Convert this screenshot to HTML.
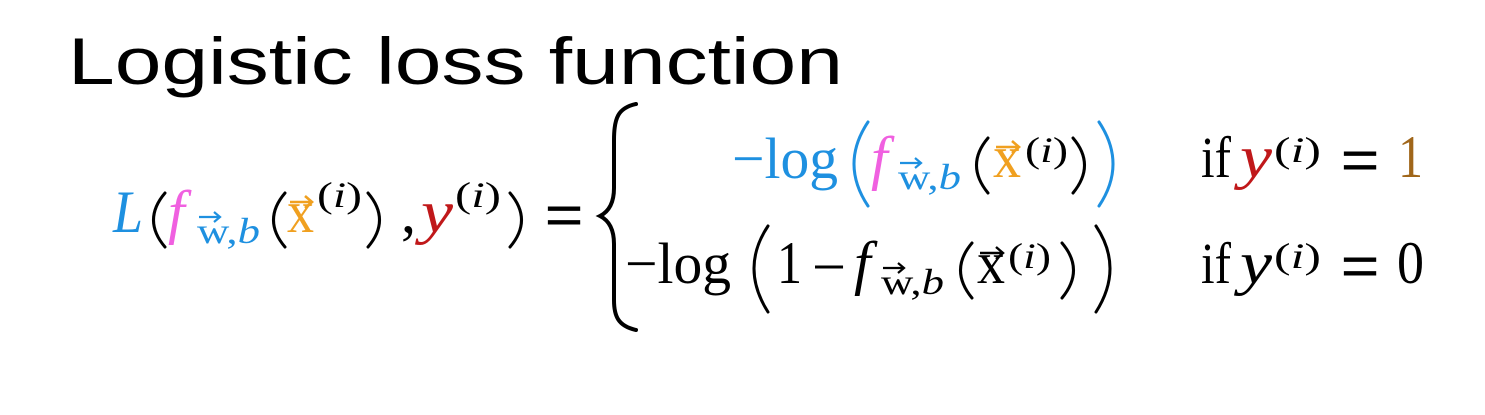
<!DOCTYPE html>
<html><head><meta charset="utf-8"><style>
html,body{margin:0;padding:0;background:#fff;}
svg{display:block}
text{font-family:"Liberation Serif",serif;}
</style></head><body>
<svg width="1485" height="415" viewBox="0 0 1485 415" xmlns="http://www.w3.org/2000/svg">
<text x="68" y="84" style="font-family:'Liberation Sans',sans-serif" font-size="66" textLength="775" lengthAdjust="spacingAndGlyphs" fill="#000">Logistic loss function</text>

<g fill="none" stroke-linecap="round">
<path d="M165 193 Q142 220 165 247" stroke="#000" stroke-width="3"/>
<path d="M285 193 Q262 220 285 247" stroke="#000" stroke-width="3"/>
<path d="M368 193 Q391 220 368 247" stroke="#000" stroke-width="3"/>
<path d="M510 193 Q533 220 510 247" stroke="#000" stroke-width="3"/>
<path d="M636 104 C618 108 614 118 614 140 L614 188 C614 204 608 212 600 216 C608 220 614 228 614 244 L614 300 C614 316 618 326 636 330" stroke="#000" stroke-width="4"/>
<path d="M868 122 Q840 164 868 206" stroke="#1e90e0" stroke-width="3"/>
<path d="M988 138 Q965 165 988 193" stroke="#000" stroke-width="3"/>
<path d="M1073 138 Q1096 165 1073 193" stroke="#000" stroke-width="3"/>
<path d="M1099 122 Q1127 164 1099 206" stroke="#1e90e0" stroke-width="3"/>
<path d="M768 226 Q740 268 768 312" stroke="#000" stroke-width="3"/>
<path d="M972 243 Q949 270 972 298" stroke="#000" stroke-width="3"/>
<path d="M1062 243 Q1085 270 1062 298" stroke="#000" stroke-width="3"/>
<path d="M1096 226 Q1124 268 1096 312" stroke="#000" stroke-width="3"/>
</g>

<!-- main line -->
<text x="113" y="232" font-size="60" font-style="italic" fill="#1e90e0" textLength="30" lengthAdjust="spacingAndGlyphs">L</text>
<text x="168" y="232" font-size="60" font-style="italic" fill="#f060e0">f</text>
<text x="197" y="243" font-size="36" fill="#1e90e0" textLength="63" lengthAdjust="spacingAndGlyphs">w,<tspan font-style="italic">b</tspan></text>
<path d="M199 217 H219 M214 212 L220 217 L214 222" stroke="#1e90e0" stroke-width="2.2" fill="none"/>
<text x="287" y="232" font-size="60" fill="#f0a020" textLength="27" lengthAdjust="spacingAndGlyphs">x</text>
<path d="M290 202 H311 M305 196 L312 202 L305 208" stroke="#f0a020" stroke-width="2.6" fill="none"/>
<text x="317" y="207" font-size="36" fill="#000" textLength="45" lengthAdjust="spacingAndGlyphs">(<tspan font-style="italic">i</tspan>)</text>
<text x="401" y="232" font-size="60" fill="#000">,</text>
<text x="421" y="232" font-size="60" font-style="italic" fill="#c0181a" textLength="32" lengthAdjust="spacingAndGlyphs">y</text>
<text x="455" y="207" font-size="36" fill="#000" textLength="46" lengthAdjust="spacingAndGlyphs">(<tspan font-style="italic">i</tspan>)</text>
<text x="545" y="238" font-size="68" fill="#000" textLength="38" lengthAdjust="spacingAndGlyphs" stroke="#000" stroke-width="1">=</text>

<!-- row1 -->
<text x="732" y="178" font-size="58" fill="#1e90e0" textLength="106" lengthAdjust="spacingAndGlyphs">−log</text>
<text x="871" y="178" font-size="60" font-style="italic" fill="#f060e0">f</text>
<text x="898" y="189" font-size="36" fill="#1e90e0" textLength="63" lengthAdjust="spacingAndGlyphs">w,<tspan font-style="italic">b</tspan></text>
<path d="M900 163 H920 M915 158 L921 163 L915 168" stroke="#1e90e0" stroke-width="2.2" fill="none"/>
<text x="993" y="177" font-size="60" fill="#f0a020" textLength="28" lengthAdjust="spacingAndGlyphs">x</text>
<path d="M996 147 H1018 M1012 141 L1019 147 L1012 153" stroke="#f0a020" stroke-width="2.6" fill="none"/>
<text x="1025" y="162" font-size="36" fill="#000" textLength="43" lengthAdjust="spacingAndGlyphs">(<tspan font-style="italic">i</tspan>)</text>
<text x="1201" y="177" font-size="58" fill="#000" textLength="30" lengthAdjust="spacingAndGlyphs">if</text>
<text x="1240" y="177" font-size="60" font-style="italic" fill="#c0181a" textLength="32" lengthAdjust="spacingAndGlyphs">y</text>
<text x="1274" y="162" font-size="36" fill="#000" textLength="47" lengthAdjust="spacingAndGlyphs">(<tspan font-style="italic">i</tspan>)</text>
<text x="1341" y="183" font-size="68" fill="#000" textLength="38" lengthAdjust="spacingAndGlyphs" stroke="#000" stroke-width="1">=</text>
<text x="1398" y="177" font-size="60" fill="#a0661a" textLength="25" lengthAdjust="spacingAndGlyphs">1</text>

<!-- row2 -->
<text x="625" y="283" font-size="58" fill="#000" textLength="106" lengthAdjust="spacingAndGlyphs">−log</text>
<text x="777" y="283" font-size="60" fill="#000" textLength="25" lengthAdjust="spacingAndGlyphs">1</text>
<text x="812" y="287" font-size="60" fill="#000" textLength="34" lengthAdjust="spacingAndGlyphs">−</text>
<text x="854" y="283" font-size="60" font-style="italic" fill="#000">f</text>
<text x="881" y="294" font-size="36" fill="#000" textLength="63" lengthAdjust="spacingAndGlyphs">w,<tspan font-style="italic">b</tspan></text>
<path d="M883 268 H903 M898 263 L904 268 L898 273" stroke="#000" stroke-width="2.2" fill="none"/>
<text x="977" y="283" font-size="60" fill="#000" textLength="28" lengthAdjust="spacingAndGlyphs">x</text>
<path d="M980 253 H1002 M996 247 L1003 253 L996 259" stroke="#000" stroke-width="2.4" fill="none"/>
<text x="1008" y="268" font-size="36" fill="#000" textLength="43" lengthAdjust="spacingAndGlyphs">(<tspan font-style="italic">i</tspan>)</text>
<text x="1201" y="283" font-size="58" fill="#000" textLength="30" lengthAdjust="spacingAndGlyphs">if</text>
<text x="1240" y="283" font-size="60" font-style="italic" fill="#000" textLength="32" lengthAdjust="spacingAndGlyphs">y</text>
<text x="1274" y="268" font-size="36" fill="#000" textLength="47" lengthAdjust="spacingAndGlyphs">(<tspan font-style="italic">i</tspan>)</text>
<text x="1341" y="289" font-size="68" fill="#000" textLength="38" lengthAdjust="spacingAndGlyphs" stroke="#000" stroke-width="1">=</text>
<text x="1397" y="283" font-size="60" fill="#000" textLength="27" lengthAdjust="spacingAndGlyphs">0</text>
</svg>
</body></html>
